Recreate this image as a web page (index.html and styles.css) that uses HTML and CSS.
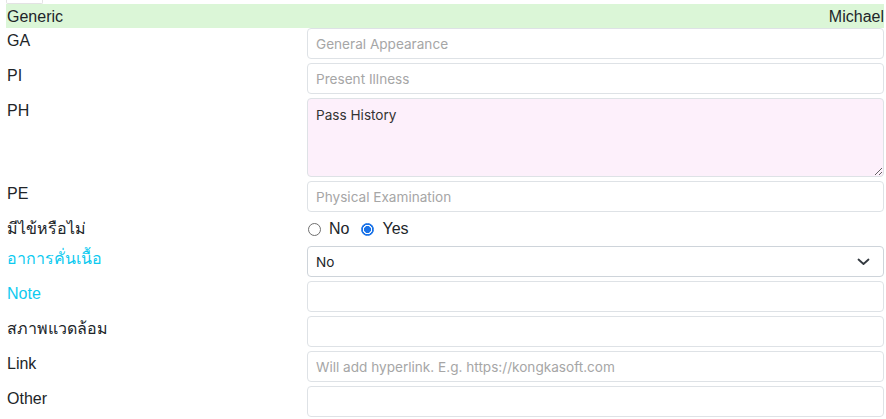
FILE: index.html
```html
<!DOCTYPE html>
<html>
<head>
<meta charset="utf-8">
<link rel="stylesheet" href="styles.css">
</head>
<body>
<div class="page">
  <div class="tab"></div>
  <div class="head"><span>Generic</span><span>Michael</span></div>
  <div class="form">
    <label class="lbl">GA</label>
    <input class="field" type="text" placeholder="General Appearance">

    <label class="lbl">PI</label>
    <input class="field" type="text" placeholder="Present Illness">

    <label class="lbl">PH</label>
    <textarea class="field area">Pass History</textarea>

    <label class="lbl">PE</label>
    <input class="field" type="text" placeholder="Physical Examination">

    <label class="lbl">มีไข้หรือไม่</label>
    <div class="radios">
      <label class="opt"><input class="radio" type="radio" name="fever"> No</label>
      <label class="opt"><input class="radio" type="radio" name="fever" checked> Yes</label>
    </div>

    <label class="lbl info">อาการคั่นเนื้อ</label>
    <div class="selwrap">
      <select class="field sel"><option>No</option><option>Yes</option></select>
      <svg class="chev" width="13" height="8" viewBox="0 0 13 8"><path d="M1.5 1.5 L6.5 6 L11.5 1.5" fill="none" stroke="#343a40" stroke-width="1.8" stroke-linecap="round" stroke-linejoin="round"/></svg>
    </div>

    <label class="lbl info">Note</label>
    <input class="field" type="text">

    <label class="lbl">สภาพแวดล้อม</label>
    <input class="field" type="text">

    <label class="lbl">Link</label>
    <input class="field" type="text" placeholder="Will add hyperlink. E.g. https://kongkasoft.com">

    <label class="lbl">Other</label>
    <input class="field" type="text">
  </div>
</div>
</body>
</html>
```
FILE: styles.css
```css
html, body {
  margin: 0;
  padding: 0;
  background: #fff;
}
body {
  font-family: "Liberation Sans", Arial, "Noto Sans", sans-serif;
  font-size: 16px;
  color: #212529;
  overflow: hidden;
}
.page {
  margin-left: 6px;
  width: 878px;
}
.tab {
  width: 35px;
  height: 3px;
  border: 1px solid #e3e3e3;
  border-top: none;
  border-radius: 0 0 2px 2px;
}
.head {
  display: flex;
  justify-content: space-between;
  box-sizing: border-box;
  background: #dbf6d7;
  height: 24px;
  line-height: 24px;
  padding: 1px 0 0 1px;
}
.form {
  display: grid;
  grid-template-columns: 301px 1fr;
  row-gap: 4px;
}
.lbl {
  line-height: 24px;
  padding: 1px 0 0 1px;
}
.lbl.info {
  color: #0dcaf0;
}
.field {
  box-sizing: border-box;
  width: 100%;
  height: 31px;
  margin: 0;
  border: 1px solid #dee2e6;
  border-radius: 4px;
  padding: 0 8px;
  font-family: Inter, "Liberation Sans", Arial, sans-serif;
  font-size: 13.6px;
  color: #333;
  background: #fff;
  outline: none;
}
.field::placeholder {
  color: #a6a6a6;
}
.area {
  height: 79px;
  padding: 7px 8px 6px;
  background: #fdf0fb;
  resize: vertical;
  line-height: 18px;
}
.radios {
  display: flex;
  align-items: center;
  height: 26px;
  gap: 11px;
}
.opt {
  display: flex;
  align-items: center;
  gap: 8px;
  font-size: 16px;
}
.radio {
  appearance: none;
  -webkit-appearance: none;
  width: 13px;
  height: 13px;
  margin: 0 0 0 1px;
  border: 1px solid #6f6f6f;
  border-radius: 50%;
  background: #fff;
  box-sizing: border-box;
}
.radio:checked {
  border: 1px solid #1a73e8;
  background: radial-gradient(circle, #1a73e8 0 3.2px, #fff 3.8px 4.4px, #1a73e8 4.9px);
}
.selwrap {
  position: relative;
}
.sel {
  appearance: none;
  -webkit-appearance: none;
  color: #212529;
  border-color: #ced4da;
}
.chev {
  position: absolute;
  right: 14px;
  top: 12px;
  pointer-events: none;
}
```
